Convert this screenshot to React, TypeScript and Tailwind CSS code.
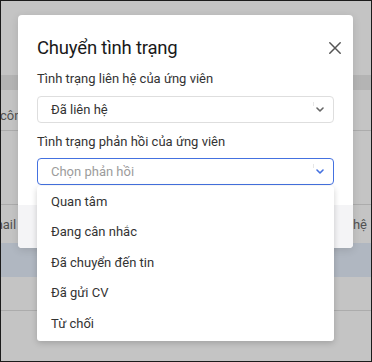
import React from "react";

function Chevron({ color }: { color: string }) {
  return (
    <svg width="8" height="5" viewBox="0 0 8 5" fill="none">
      <path d="M1 1 L4 4 L7 1" stroke={color} strokeWidth="1.6" strokeLinecap="round" strokeLinejoin="round" />
    </svg>
  );
}

const options = ["Quan tâm", "Đang cân nhắc", "Đã chuyển đến tin", "Đã gửi CV", "Từ chối"];

export default function App() {
  return (
    <div className="relative w-[372px] h-[362px] overflow-hidden border border-[#1b1b1b] bg-white [font-family:Roboto,'Noto_Sans',sans-serif] text-[13px]">
      {/* background page */}
      <div className="flex flex-col w-full">
        <div className="h-[74px]" />
        <div className="h-[15px] bg-[#ebebeb]" />
        <div className="h-[41px] border-b border-[#e0e0e0] flex items-center pt-[11px]">
          <span className="ml-[-1px] text-[#6a6a6a]">công ty</span>
        </div>
        <div className="h-[74px] border-b border-[#e0e0e0]" />
        <div className="h-[38px] flex items-center justify-between pt-[2px]">
          <span className="ml-[-17px] text-[#6a6a6a]">Email</span>
          <span className="mr-[4px] text-[#6a6a6a]">Liên hệ</span>
        </div>
        <div className="h-[34px] bg-[#e6effb]" />
        <div className="h-[34px] border-b border-[#e0e0e0]" />
      </div>

      {/* overlay */}
      <div className="absolute inset-0 bg-black/[0.23]" />

      {/* modal */}
      <div className="absolute left-[17px] top-[14px] w-[335px] h-[233px] bg-white rounded-[4px] shadow-[0_2px_8px_rgba(0,0,0,0.12)] flex flex-col">
        <div className="px-[19px] pt-[19px] flex flex-col">
          <div className="h-[28px] flex items-center justify-between">
            <h2 className="text-[18.5px] leading-[28px] tracking-[-0.2px] text-[#1a1a1a] font-normal">Chuyển tình trạng</h2>
            <button className="mr-[-7px] w-[12px] h-[12px] flex items-center justify-center">
              <svg width="12" height="12" viewBox="0 0 12 12" fill="none">
                <path d="M0.8 0.8 L11.2 11.2 M11.2 0.8 L0.8 11.2" stroke="#555" strokeWidth="1.5" strokeLinecap="round" />
              </svg>
            </button>
          </div>

          <label className="mt-[8px] leading-[18px] text-[#333]">Tình trạng liên hệ của ứng viên</label>
          <div className="mt-[8px] h-[27px] border border-[#dedede] rounded-[4px] flex items-center pl-[13px] pr-[9px]">
            <span className="flex-1 text-[#333]">Đã liên hệ</span>
            <span className="w-[1px] h-[4px] bg-[#e6e6e6] self-start mt-[5px] mr-[2px]" />
            <Chevron color="#666" />
          </div>

          <label className="mt-[10px] leading-[18px] text-[#333]">Tình trạng phản hồi của ứng viên</label>
          <div className="relative mt-[7px]">
            <div className="h-[27px] border border-[#4471e0] rounded-[4px] flex items-center pl-[13px] pr-[9px]">
              <span className="flex-1 text-[#9c9c9c]">Chọn phản hồi</span>
              <span className="w-[1px] h-[4px] bg-[#e6e6e6] self-start mt-[5px] mr-[2px]" />
              <Chevron color="#4471e0" />
            </div>
            <div className="absolute left-0 right-0 top-[calc(100%+1px)] z-10 bg-white rounded-[3px] shadow-[0_2px_6px_rgba(0,0,0,0.18)] flex flex-col pb-[2px]">
              {options.map((o) => (
                <div key={o} className="h-[30.6px] flex items-center px-[14px] text-[#333]">
                  {o}
                </div>
              ))}
            </div>
          </div>
        </div>
        <div className="mt-auto h-[43px] bg-[#f4f4f6] rounded-b-[4px]" />
      </div>
    </div>
  );
}
